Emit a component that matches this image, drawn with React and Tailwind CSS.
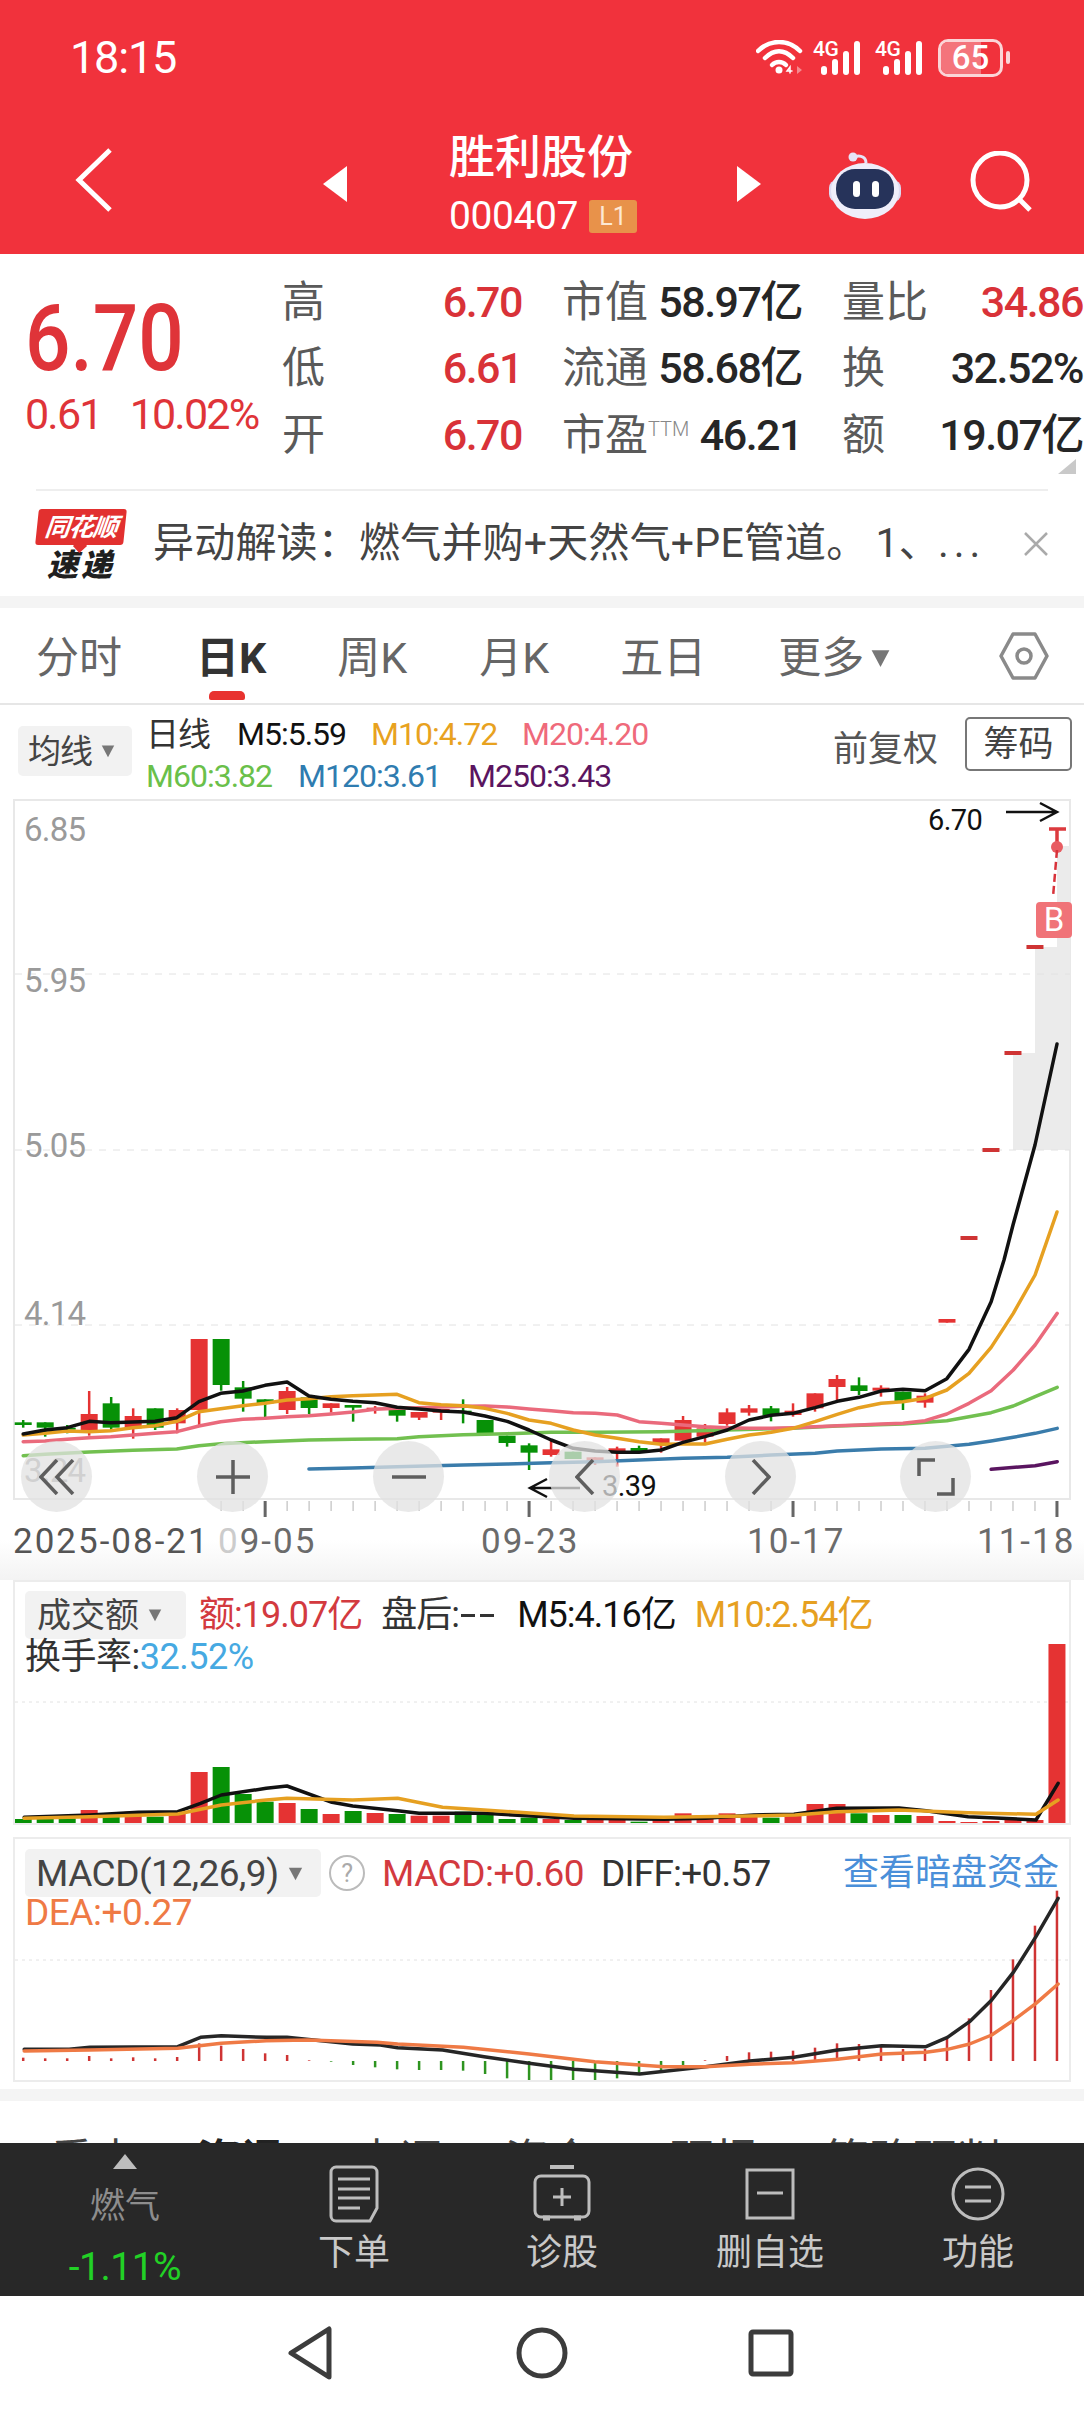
import React from 'react'

const RED = '#e53333'
const GREEN = '#079107'

const cx = (i) => 23.2 + 21.995 * i
const zy = (y) => 1260 + y / 3

// r/g, body top, body bottom, wick top, wick bottom (zoomed y)
const candles = [
  ['g', 487, 495, 480, 503], ['g', 487, 503, 487, 530], ['g', 503, 507, 495, 520], ['r', 462, 515, 393, 527],
  ['g', 430, 503, 411, 510], ['r', 468, 505, 445, 536], ['g', 445, 503, 445, 510], ['r', 450, 490, 445, 520],
  ['r', 237, 450, 237, 495], ['g', 237, 375, 237, 392], ['g', 382, 416, 363, 455], ['g', 418, 430, 418, 472],
  ['r', 393, 450, 381, 462], ['g', 412, 444, 412, 462], ['r', 430, 444, 430, 458], ['g', 435, 443, 435, 485],
  ['r', 443, 449, 438, 461], ['g', 450, 467, 450, 485], ['r', 456, 473, 456, 480], ['r', 447, 458, 447, 480],
  ['g', 452, 458, 418, 490], ['g', 480, 522, 480, 522], ['g', 527, 549, 527, 560], ['g', 556, 578, 550, 630],
  ['r', 568, 585, 543, 590], ['g', 575, 597, 575, 597], ['r', 592, 606, 592, 615], ['r', 565, 577, 560, 620],
  ['g', 564, 577, 557, 577], ['r', 535, 552, 535, 578], ['r', 480, 542, 468, 542], ['r', 505, 530, 492, 548],
  ['r', 457, 492, 445, 497], ['r', 445, 458, 435, 467], ['g', 445, 467, 438, 484], ['r', 452, 465, 430, 470],
  ['r', 400, 445, 400, 455], ['r', 357, 381, 345, 420], ['g', 376, 393, 352, 405], ['r', 383, 392, 376, 410],
  ['g', 395, 423, 395, 450], ['r', 407, 428, 400, 443], ['r', 177, 188, 177, 188],
]

const dashes = [[43, 1238], [44, 1150], [45, 1053], [46, 947]]

const z3 = (pts) => pts.map(([x, y]) => [x / 2.8, zy(y)])
const z4 = (pts) => pts.map(([x, y]) => [524 + x / 2.8, zy(y)])

const m5 = [
  ...z3([[65, 522], [126, 510], [188, 503], [250, 484], [310, 488], [372, 486], [434, 484], [495, 473], [557, 425], [618, 400], [680, 393], [742, 376], [804, 366], [865, 408], [927, 418], [988, 424], [1050, 428], [1112, 442], [1173, 447], [1235, 453], [1297, 456], [1358, 468], [1420, 484]]),
  ...z4([[14, 510], [76, 540], [138, 565], [199, 573], [261, 577], [322, 577], [384, 570], [445, 547], [507, 530], [569, 510], [630, 480], [692, 466], [753, 460], [815, 443], [877, 424], [938, 412], [1000, 393], [1061, 388], [1123, 392], [1184, 356], [1246, 268], [1308, 125]]),
  [1004, 1260], [1013, 1225], [1035, 1145], [1057, 1044],
]
const m10 = [
  ...z3([[65, 525], [126, 520], [188, 513], [250, 515], [310, 512], [372, 503], [434, 497], [495, 484], [557, 455], [618, 446], [680, 437], [742, 430], [804, 420], [865, 416], [927, 410], [988, 407], [1050, 405], [1112, 403], [1173, 428], [1235, 434], [1297, 437], [1358, 445], [1420, 460]]),
  ...z4([[14, 480], [76, 490], [138, 510], [199, 525], [261, 535], [322, 545], [384, 553], [445, 552], [507, 552], [569, 538], [630, 525], [692, 517], [753, 505], [815, 485], [877, 463], [938, 443], [1000, 430], [1061, 425], [1123, 415], [1184, 390], [1246, 340], [1308, 262], [1370, 160], [1431, 45]]),
  [1057, 1212],
]
const m20 = [
  ...z3([[65, 545], [126, 543], [188, 538], [250, 533], [310, 530], [372, 525], [434, 520], [495, 515], [557, 498], [618, 485], [680, 478], [742, 475], [804, 470], [865, 467], [927, 462], [988, 456], [1050, 448], [1112, 445], [1173, 443], [1235, 441], [1297, 439], [1358, 438], [1420, 441]]),
  ...z4([[14, 447], [76, 452], [138, 458], [199, 460], [261, 465], [322, 485], [384, 490], [445, 495], [507, 500], [569, 503], [630, 505], [692, 505], [753, 503], [815, 500], [877, 497], [938, 495], [1000, 492], [1061, 490], [1123, 482], [1184, 462], [1246, 430], [1308, 392], [1370, 330], [1431, 255], [1493, 160]]),
]
const m60 = [
  ...z3([[65, 587], [126, 583], [250, 576], [372, 571], [495, 567], [557, 557], [618, 551], [742, 545], [865, 540], [988, 538], [1112, 536], [1173, 530], [1297, 524], [1420, 521]]),
  ...z4([[76, 517], [200, 517], [384, 515], [569, 510], [753, 505], [877, 498], [1061, 492], [1184, 482], [1308, 458], [1370, 438], [1431, 410], [1493, 382]]),
]
const m120 = [
  ...z3([[865, 627], [988, 624], [1112, 620], [1297, 615], [1420, 612]]),
  ...z4([[76, 608], [199, 605], [322, 600], [445, 595], [569, 592], [692, 585], [815, 580], [877, 573], [1000, 567], [1123, 565], [1246, 553], [1308, 543], [1370, 532], [1431, 520], [1493, 505]]),
]
const m250 = z4([[1308, 628], [1431, 617], [1493, 605]])

// volume bars: color + top in zoomed y
const volume = [
  ['g', 747], ['g', 747], ['g', 745], ['r', 720], ['g', 740], ['r', 725], ['g', 740], ['r', 730], ['r', 606], ['g', 591],
  ['g', 672], ['g', 695], ['r', 699], ['g', 717], ['r', 732], ['g', 723], ['r', 729], ['g', 732], ['r', 737], ['r', 737],
  ['g', 725], ['g', 733], ['g', 747], ['g', 743], ['r', 747], ['g', 750], ['r', 747], ['r', 747], ['g', 755], ['r', 747],
  ['r', 730], ['r', 742], ['r', 730], ['r', 740], ['g', 743], ['r', 738], ['r', 702], ['r', 702], ['g', 730], ['r', 735],
  ['g', 735], ['r', 738], ['r', 753], ['r', 756], ['r', 753], ['r', 748], ['r', 750], ['r', 222],
]
const volBlack = [[35, 742], [130, 735], [200, 727], [257, 725], [290, 700], [320, 675], [385, 655], [415, 648], [480, 697], [510, 708], [575, 722], [606, 730], [700, 730], [830, 745], [960, 748], [1020, 745], [1090, 735], [1148, 733], [1210, 715], [1300, 714], [1339, 722], [1400, 740], [1498, 750], [1530, 640]]
const volOrange = [[35, 745], [130, 740], [257, 732], [320, 705], [385, 690], [415, 685], [510, 690], [575, 685], [640, 712], [700, 720], [830, 738], [960, 742], [1084, 738], [1150, 735], [1211, 725], [1300, 720], [1400, 728], [1498, 733], [1530, 690]]

const macdTops = [683, 685, 685, 678, 685, 682, 685, 681, 640, 647, 657, 670, 675, 691, 695, 705, 712, 718, 720, 720, 722, 732, 745, 752, 755, 755, 755, 745, 735, 720, 708, 691, 678, 667, 665, 662, 653, 640, 642, 647, 657, 657, 625, 565, 480, 388, 287, 182]
const macdBlack = [[35, 658], [100, 658], [130, 652], [257, 650], [290, 622], [320, 617], [385, 622], [415, 622], [510, 642], [550, 645], [575, 653], [640, 660], [700, 680], [765, 700], [830, 718], [925, 732], [1020, 710], [1084, 693], [1148, 682], [1211, 660], [1275, 647], [1339, 650], [1370, 622], [1402, 575], [1434, 510], [1466, 425], [1498, 320], [1530, 205]]
const macdOrange = [[35, 663], [130, 660], [257, 655], [320, 640], [385, 632], [445, 630], [545, 637], [575, 642], [670, 652], [765, 672], [860, 695], [960, 710], [1020, 710], [1084, 703], [1148, 698], [1211, 688], [1275, 672], [1339, 667], [1370, 658], [1402, 642], [1434, 615], [1466, 570], [1498, 520], [1530, 462]]

const toPts = (pts) => pts.map((p) => p.join(',')).join(' ')
const lower = (pts, base) => pts.map(([x, y]) => [x / 1.446, base + y / 3])

function Line({ pts, color, w = 3.5 }) {
  return <polyline points={toPts(pts)} fill="none" stroke={color} strokeWidth={w} strokeLinejoin="round" strokeLinecap="round" />
}

function Caret({ className }) {
  return (
    <svg width="18" height="18" viewBox="0 0 18 18" className={className}>
      <path d="M1 2h16L9 17z" fill="#777" />
    </svg>
  )
}

function StatusBar() {
  const Signal = () => (
    <svg width="50" height="36" viewBox="0 0 50 36" className="overflow-visible">
      <text x="0" y="16" fontSize="21" fontWeight="500" fill="#fff" fontFamily="Roboto" letterSpacing="-0.5">4G</text>
      <g fill="#fff">
        <rect x="8" y="26" width="6" height="9" rx="3" />
        <rect x="19" y="19" width="6" height="16" rx="3" />
        <rect x="30" y="11" width="6" height="24" rx="3" />
        <rect x="41" y="1" width="6" height="34" rx="3" />
      </g>
    </svg>
  )
  return (
    <div className="flex items-center h-[114px] pl-[70px] pt-[1px]">
      <span className="text-[45px] leading-none text-white tracking-[-1.2px]">18:15</span>
      <div className="ml-auto mr-[74px] flex items-center">
        <svg width="48" height="36" viewBox="0 0 48 36" fill="none" stroke="#fff" strokeWidth="4.5" strokeLinecap="round">
          <path d="M2 11C14 -1 32 -1 44 11" />
          <path d="M9 18C18 9 28 9 37 18" />
          <path d="M16 25C20 21 26 21 30 25" />
          <circle cx="23" cy="30" r="3.5" fill="#fff" stroke="none" />
          <path d="M34 33v-6l-3 4h5" stroke="#fff" strokeWidth="1.5" />
          <path d="M41 26l5 4-5 4z" fill="#f58a90" stroke="none" />
        </svg>
        <div className="ml-[9px]"><Signal /></div>
        <div className="ml-[12px]"><Signal /></div>
        <div className="ml-[13px] relative w-[65px] h-[38px] rounded-[10px] border-[3px] border-[#fbd5d7] overflow-hidden flex items-center justify-center">
          <div className="absolute left-0 top-0 bottom-0 w-[68%] bg-[#f4747b]" />
          <span className="relative text-[33px] font-medium leading-none text-white">65</span>
        </div>
        <div className="ml-[3px] w-[4px] h-[13px] rounded-full bg-[#fbd5d7]" />
      </div>
    </div>
  )
}

function NavRow() {
  return (
    <div className="flex items-center h-[140px] pb-[8px]">
      <svg width="40" height="64" viewBox="0 0 40 64" className="ml-[74px]" fill="none" stroke="#fff" strokeWidth="5">
        <path d="M36 2L5 32l31 30" />
      </svg>
      <svg width="24" height="36" viewBox="0 0 24 36" className="ml-[209px] mt-[8px]"><path d="M24 0v36L0 18z" fill="#fff" /></svg>
      <div className="ml-[102px] w-[200px] flex flex-col mt-[9px]">
        <span className="text-[46px] leading-none font-medium text-white">胜利股份</span>
        <div className="flex items-center mt-[17px]">
          <span className="text-[39px] leading-none text-white tracking-[-0.4px]">000407</span>
          <span className="ml-[11px] w-[48px] h-[33px] bg-[#e8924a] rounded-[3px] text-[#fde8d4] text-[25px] leading-[33px] text-center">L1</span>
        </div>
      </div>
      <svg width="24" height="36" viewBox="0 0 24 36" className="ml-[88px] mt-[8px]"><path d="M0 0v36l24-18z" fill="#fff" /></svg>
      <svg width="76" height="70" viewBox="0 0 76 70" className="ml-[66px] mt-[10px]">
        <path d="M26 8c4-3 13-3 13 5" fill="none" stroke="#e6e4f7" strokeWidth="3" />
        <circle cx="26" cy="7" r="4.5" fill="#e6e4f7" />
        <rect x="2" y="30" width="72" height="22" rx="8" fill="#dcdbf2" />
        <ellipse cx="38" cy="41" rx="34" ry="28" fill="#efeefa" />
        <rect x="9" y="19" width="58" height="40" rx="19" fill="#26335a" />
        <rect x="26" y="31" width="7" height="16" rx="3.5" fill="#fff" />
        <rect x="45" y="31" width="7" height="16" rx="3.5" fill="#fff" />
      </svg>
      <svg width="64" height="64" viewBox="0 0 64 64" className="ml-[67px] mt-[6px]" fill="none" stroke="#fff" strokeWidth="5">
        <circle cx="30" cy="29" r="27" />
        <path d="M49 48l11 11" />
      </svg>
    </div>
  )
}

function QuoteCell({ label, value, tone, sup }) {
  return (
    <div className="flex justify-between items-center h-[66.5px]">
      <span className="text-[43px] leading-none text-[#5a5a5a] whitespace-nowrap">
        {label}
        {sup && <span className="text-[20px] align-[14px] text-[#888] font-light">{sup}</span>}
      </span>
      <span className={`text-[43px] leading-none tracking-[-1.5px] font-medium whitespace-nowrap ${tone === 'red' ? 'text-[#d93238]' : 'text-[#262626]'}`}>{value}</span>
    </div>
  )
}

function Quote() {
  return (
    <div className="relative h-[235px] flex">
      <div className="w-[282px] pl-[25px] pt-[40px] shrink-0">
        <div className="inline-block origin-left scale-x-[0.87] text-[92px] leading-[90px] font-medium text-[#df3439]">6.70</div>
        <div className="flex mt-[9px] text-[43px] leading-none text-[#df3439] tracking-[-1.8px]">
          <span>0.61</span>
          <span className="ml-[28px]">10.02%</span>
        </div>
      </div>
      <div className="grid grid-cols-[240px_240px_241px] gap-x-[40px] pt-[15px] h-fit">
        <QuoteCell label="高" value="6.70" tone="red" />
        <QuoteCell label="市值" value="58.97亿" />
        <QuoteCell label="量比" value="34.86" tone="red" />
        <QuoteCell label="低" value="6.61" tone="red" />
        <QuoteCell label="流通" value="58.68亿" />
        <QuoteCell label="换" value="32.52%" />
        <QuoteCell label="开" value="6.70" tone="red" />
        <QuoteCell label="市盈" sup="TTM" value="46.21" />
        <QuoteCell label="额" value="19.07亿" />
      </div>
      <div className="absolute right-[8px] top-[205px] w-0 h-0 border-l-[18px] border-l-transparent border-b-[15px] border-b-[#c9c9c9]" />
    </div>
  )
}

function NewsRow() {
  return (
    <div className="mx-[36px] h-[107px] border-t-2 border-[#eeeeee] flex items-center">
      <div className="w-[90px] h-[72px] shrink-0 flex flex-col items-center relative mt-[2px]">
        <div className="relative w-[88px] h-[36px] bg-[#e2302f] rounded-[3px] -skew-x-6 flex items-center justify-center">
          <span className="text-[25px] leading-none font-bold italic text-white whitespace-nowrap tracking-[-1px]">同花顺</span>
          <div className="absolute left-[40px] bottom-[-6px] w-[10px] h-[10px] bg-[#e2302f] rotate-45" />
        </div>
        <span className="text-[31px] leading-none font-black italic text-[#1f1f1f] mt-[5px] tracking-[3px]">速递</span>
      </div>
      <span className="ml-[27px] w-[850px] text-[41px] leading-none text-[#444] whitespace-nowrap tracking-[0.2px]">
        异动解读：燃气并购+天然气+PE管道。
        <span className="ml-[8px]">1、</span>
        <span className="ml-[-2px] tracking-[5px]">...</span>
      </span>
      <svg width="24" height="24" viewBox="0 0 24 24" className="ml-[21px]" fill="none" stroke="#aaa" strokeWidth="2.5"><path d="M1 1l22 22M23 1L1 23" /></svg>
    </div>
  )
}

function Tabs() {
  return (
    <div className="relative h-[97px] border-b-2 border-[#e6e6e6] flex items-center text-[43px] leading-none text-[#666] pt-[5px]">
      <span className="ml-[36px]">分时</span>
      <span className="ml-[74px] font-bold text-[#333] relative">
        日K
        <span className="absolute left-[13px] top-[54px] w-[36px] h-[9px] rounded-t-[5px] rounded-b-[2px] bg-[#e8322f]" />
      </span>
      <span className="ml-[71px]">周K</span>
      <span className="ml-[72px]">月K</span>
      <span className="ml-[71px]">五日</span>
      <span className="ml-[72px]">更多</span>
      <Caret className="ml-[5px] w-[23px] h-[20px]" />
      <svg width="50" height="48" viewBox="0 0 50 48" className="ml-[107px] mt-[-5px]" fill="none" stroke="#8a8a8a" strokeWidth="3.5">
        <path d="M14 2h22l12 22-12 22H14L2 24z" strokeLinejoin="round" />
        <circle cx="25" cy="24" r="7" />
      </svg>
    </div>
  )
}

function MaHeader() {
  return (
    <div className="h-[94px] flex text-[32px] leading-none tracking-[-1px]">
      <div className="ml-[18px] mt-[21px] w-[114px] h-[50px] rounded-[5px] bg-[#f2f2f2] flex items-center pl-[10px] text-[33px] text-[#444]">
        均线
        <Caret className="ml-[8px] w-[16px] h-[14px]" />
      </div>
      <div className="ml-[14px] flex flex-col">
        <div className="flex items-center mt-[12px] h-[34px]">
          <span className="text-[33px] text-[#333]">日线</span>
          <span className="ml-[27px] text-[#111]">M5:5.59</span>
          <span className="ml-[25px] text-[#e8a21f]">M10:4.72</span>
          <span className="ml-[25px] text-[#ef6a7b]">M20:4.20</span>
        </div>
        <div className="flex items-center mt-[8px] h-[34px]">
          <span className="text-[#6ac04a]">M60:3.82</span>
          <span className="ml-[26px] text-[#2f7cb0]">M120:3.61</span>
          <span className="ml-[27px] text-[#5a1560]">M250:3.43</span>
        </div>
      </div>
      <span className="ml-auto mt-[27px] text-[35px] text-[#555] tracking-normal h-fit">前复权</span>
      <div className="ml-[27px] mr-[12px] mt-[12px] w-[107px] h-[54px] border-2 border-[#777] rounded-[5px] text-[35px] text-[#444] tracking-normal flex items-center justify-center">筹码</div>
    </div>
  )
}

function GridLine({ y, x1, x2, color = '#e2e2e2', dash = '7 7' }) {
  return <line x1={x1} x2={x2} y1={y} y2={y} stroke={color} strokeWidth="1" strokeDasharray={dash} />
}

const ROUND_BTN = 'absolute top-[640px] w-[71px] h-[71px] rounded-full bg-[#e2e2e2]/75 flex items-center justify-center'

function KChart() {
  return (
    <div className="relative mx-[13px] h-[701px] border-2 border-[#e8e8e8]">
      <svg width="1055" height="697" viewBox="15 801 1055 697" className="block overflow-visible" fontFamily="Roboto">
        <rect x="1013" y="1053" width="57" height="97" fill="#ebebeb" />
        <rect x="1035" y="947" width="35" height="106" fill="#ebebeb" />
        <rect x="1057" y="846" width="13" height="101" fill="#ebebeb" />
        <GridLine y={974} x1={15} x2={1070} />
        <GridLine y={1150} x1={15} x2={1070} />
        <GridLine y={1325} x1={15} x2={1070} />
        <g fontSize="33" fill="#9a9a9a" letterSpacing="-0.8">
          <text x="24" y="841">6.85</text>
          <text x="24" y="992">5.95</text>
          <text x="24" y="1157">5.05</text>
          <text x="24" y="1325">4.14</text>
          <text x="24" y="1482">3.24</text>
        </g>
        {candles.map(([c, bt, bb, wt, wb], i) => {
          const color = c === 'r' ? RED : GREEN
          return (
            <g key={i}>
              <line x1={cx(i)} x2={cx(i)} y1={zy(wt)} y2={zy(wb)} stroke={color} strokeWidth="2.5" />
              <rect x={cx(i) - 8.5} y={zy(bt)} width="17" height={Math.max((bb - bt) / 3, 2)} fill={color} />
            </g>
          )
        })}
        {dashes.map(([i, y]) => (
          <rect key={i} x={cx(i) - 8.5} y={y - 2} width="17" height="4" fill="#cf3434" />
        ))}
        <Line pts={m250} color="#5a1560" />
        <Line pts={m120} color="#3a7cab" />
        <Line pts={m60} color="#72c050" />
        <Line pts={m20} color="#ea6a7c" />
        <Line pts={m10} color="#e6a021" />
        <Line pts={m5} color="#111111" />
        <path d="M1049 829h17M1057 829v18" stroke="#dc3a3e" strokeWidth="3.5" fill="none" />
        <circle cx="1057" cy="847" r="6" fill="#e85c62" />
        <line x1="1057" y1="850" x2="1053" y2="897" stroke="#d8323a" strokeWidth="2.5" strokeDasharray="8 4" />
        <text x="928" y="830" fontSize="29" fill="#111" letterSpacing="-0.6">6.70</text>
        <path d="M1006 812h50M1040 803l17 9-17 9" fill="none" stroke="#111" strokeWidth="2.5" />
        <text x="602" y="1496" fontSize="29" fill="#111" letterSpacing="-0.6">3.39</text>
        <path d="M580 1488h-50M547 1479l-17 9 17 9" fill="none" stroke="#111" strokeWidth="2.5" />
      </svg>
      <div className="absolute left-[1021px] top-[101px] w-[36px] h-[36px] rounded-[4px] bg-[#f07378] text-white text-[33px] leading-[36px] text-center">
        B
        <div className="absolute left-[14px] top-[-4px] w-[9px] h-[9px] bg-[#f07378] rotate-45 -z-10" />
      </div>
      <div className={`${ROUND_BTN} left-[6px]`}>
        <svg width="36" height="36" viewBox="0 0 36 36" fill="none" stroke="#5e5e5e" strokeWidth="3.5"><path d="M18 1L2 18l16 17M34 1L18 18l16 17" /></svg>
      </div>
      <div className={`${ROUND_BTN} left-[182px]`}>
        <svg width="34" height="34" viewBox="0 0 34 34" fill="none" stroke="#5e5e5e" strokeWidth="3.5"><path d="M0 17h34M17 0v34" /></svg>
      </div>
      <div className={`${ROUND_BTN} left-[358px]`}>
        <svg width="34" height="6" viewBox="0 0 34 6" fill="none" stroke="#5e5e5e" strokeWidth="3.5"><path d="M0 3h34" /></svg>
      </div>
      <div className={`${ROUND_BTN} left-[534px]`}>
        <svg width="20" height="36" viewBox="0 0 20 36" fill="none" stroke="#5e5e5e" strokeWidth="3.5"><path d="M18 1L2 18l16 17" /></svg>
      </div>
      <div className={`${ROUND_BTN} left-[710px]`}>
        <svg width="20" height="36" viewBox="0 0 20 36" fill="none" stroke="#5e5e5e" strokeWidth="3.5"><path d="M2 1l16 17L2 35" /></svg>
      </div>
      <div className={`${ROUND_BTN} left-[885px]`}>
        <svg width="38" height="38" viewBox="0 0 38 38" fill="none" stroke="#5e5e5e" strokeWidth="3.5"><path d="M2 18V2h16M36 20v16H20" /></svg>
      </div>
    </div>
  )
}

function Axis() {
  const minor = Array.from({ length: 38 }, (_, i) => i + 9).filter((i) => ![11, 23, 35].includes(i))
  return (
    <div className="h-[80px] bg-linear-to-b from-white via-white to-[#f3f3f3]">
      <svg width="1084" height="18" viewBox="0 1499 1084 18" className="block">
        {minor.map((i) => (
          <line key={i} x1={cx(i)} x2={cx(i)} y1="1500" y2="1510" stroke="#cccccc" strokeWidth="1.5" />
        ))}
        {[11, 23, 35, 47].map((i) => (
          <line key={i} x1={cx(i)} x2={cx(i)} y1="1500" y2="1516" stroke="#666" strokeWidth="3" />
        ))}
      </svg>
      <div className="flex text-[35px] leading-none text-[#6b6b6b] mt-[6px] tracking-[2px]">
        <span className="ml-[13px] w-[205px] text-[#555]">2025-08-21</span>
        <span className="w-[263px]"><span className="text-[#cccccc]">0</span>9-05</span>
        <span className="w-[266px]">09-23</span>
        <span className="w-[230px]">10-17</span>
        <span>11-18</span>
      </div>
    </div>
  )
}

function Volume() {
  return (
    <div className="relative mx-[13px] h-[245px] border-2 border-[#ececec] tracking-[-1px]">
      <svg width="1055" height="241" viewBox="15 1582 1055 241" className="absolute left-0 top-0">
        <GridLine y={1702} x1={15} x2={1070} dash="3 4" />
        {volume.map(([c, t], i) => (
          <rect key={i} x={cx(i) - 8.5} y={1570 + t / 3} width="17" height={1825 - 1570 - t / 3} fill={c === 'r' ? '#e53333' : '#079107'} />
        ))}
        <Line pts={lower(volBlack, 1570)} color="#111" />
        <Line pts={lower(volOrange, 1570)} color="#e6a021" />
      </svg>
      <div className="relative flex items-center pt-[9px] pl-[10px] text-[36px] leading-none">
        <div className="w-[161px] h-[48px] rounded-[5px] bg-[#f2f2f2] flex items-center pl-[12px] text-[#444] tracking-normal text-[34px]">
          成交额
          <Caret className="ml-[8px] w-[16px] h-[14px]" />
        </div>
        <span className="ml-[13px] text-[#d33a3f]">额:19.07亿</span>
        <span className="ml-[19px] w-[121px] text-[#333] flex items-center">
          盘后:
          <span className="ml-[2px] w-[14px] h-[3px] bg-[#333]" />
          <span className="ml-[5px] w-[14px] h-[3px] bg-[#333]" />
        </span>
        <span className="ml-[15px] text-[#111]">M5:4.16亿</span>
        <span className="ml-[19px] text-[#e6a021]">M10:2.54亿</span>
      </div>
      <div className="relative pl-[10px] text-[36px] leading-[36px] tracking-[-0.5px] text-[#333]">
        换手率:<span className="text-[#46a9e2]">32.52%</span>
      </div>
    </div>
  )
}

function Macd() {
  return (
    <div className="relative mx-[13px] mt-[12px] h-[245px] border-2 border-[#ececec] tracking-[-0.5px]">
      <svg width="1055" height="241" viewBox="15 1839 1055 241" className="absolute left-0 top-0">
        <GridLine y={1960} x1={15} x2={1070} dash="3 4" />
        {macdTops.map((t, i) => {
          const top = 1830 + t / 3
          return <line key={i} x1={cx(i)} x2={cx(i)} y1={Math.min(top, 2061)} y2={Math.max(top, 2061)} stroke={t > 693 ? '#2e9420' : '#cf3434'} strokeWidth="2.5" />
        })}
        <Line pts={lower(macdBlack, 1830)} color="#262626" />
        <Line pts={lower(macdOrange, 1830)} color="#ef7a45" />
      </svg>
      <div className="relative flex items-center pt-[10px] pl-[10px] text-[37px] leading-none">
        <div className="w-[296px] h-[48px] rounded-[5px] bg-[#f2f2f2] flex items-center pl-[11px] text-[#444] text-[37px] tracking-[-0.5px]">
          MACD(12,26,9)
          <Caret className="ml-[8px] w-[17px] h-[15px]" />
        </div>
        <span className="ml-[8px] w-[36px] h-[36px] rounded-full border-2 border-[#bbb] text-[#aaa] text-[25px] flex items-center justify-center">?</span>
        <span className="ml-[17px] text-[#d33a3f]">MACD:+0.60</span>
        <span className="ml-[17px] text-[#333] tracking-[-0.8px]">DIFF:+0.57</span>
        <span className="ml-auto mr-[10px] text-[#4a8fd9] tracking-normal text-[36px]">查看暗盘资金</span>
      </div>
      <div className="relative pl-[10px] mt-[-2px] text-[37px] leading-[36px] text-[#ef7a45]">DEA:+0.27</div>
    </div>
  )
}

function BarItem({ label, children }) {
  return (
    <div className="w-[208px] flex flex-col items-center pt-[22px]">
      <div className="h-[58px] flex items-center">{children}</div>
      <span className="mt-[12px] text-[36px] leading-none text-[#c9c9c9]">{label}</span>
    </div>
  )
}

function BottomBar() {
  return (
    <div className="h-[153px] bg-[#282828] flex">
      <div className="w-[250px] flex flex-col items-center">
        <div className="mt-[11px] w-0 h-0 border-x-[12px] border-x-transparent border-b-[15px] border-b-[#bdbdbd]" />
        <span className="mt-[20px] text-[35px] leading-none text-[#8d8d8d]">燃气</span>
        <span className="mt-[24px] text-[39px] leading-none text-[#22d126] tracking-[-0.5px]">-1.11%</span>
      </div>
      <BarItem label="下单">
        <svg width="50" height="58" viewBox="0 0 50 58" fill="none" stroke="#bdbdbd" strokeWidth="3">
          <path d="M7 2h36a5 5 0 0 1 5 5v36l-7 13H7a5 5 0 0 1-5-5V7a5 5 0 0 1 5-5z" />
          <path d="M9 14h32M9 24h32M9 33h32M9 43h22" />
        </svg>
      </BarItem>
      <BarItem label="诊股">
        <svg width="58" height="58" viewBox="0 0 58 58" fill="none" stroke="#bdbdbd" strokeWidth="3">
          <path d="M17 2h24" strokeWidth="4" />
          <rect x="2" y="11" width="54" height="41" rx="6" />
          <path d="M29 23v18M20 32h18" />
          <path d="M10 53h7M41 53h7" strokeWidth="5" />
        </svg>
      </BarItem>
      <BarItem label="删自选">
        <svg width="50" height="52" viewBox="0 0 50 52" fill="none" stroke="#bdbdbd" strokeWidth="3">
          <rect x="2" y="2" width="46" height="48" />
          <path d="M12 25h26" />
        </svg>
      </BarItem>
      <BarItem label="功能">
        <svg width="54" height="54" viewBox="0 0 54 54" fill="none" stroke="#bdbdbd" strokeWidth="3">
          <circle cx="27" cy="27" r="25" />
          <path d="M14 20h26M14 34h26" />
        </svg>
      </BarItem>
    </div>
  )
}

function SysNav() {
  return (
    <div className="flex-1 bg-white flex items-center pb-[2px]">
      <svg width="48" height="54" viewBox="0 0 48 54" className="ml-[288px]" fill="none" stroke="#3c3c3c" strokeWidth="5" strokeLinejoin="round">
        <path d="M41 3v48L3 27z" />
      </svg>
      <svg width="52" height="52" viewBox="0 0 52 52" className="ml-[180px]" fill="none" stroke="#3c3c3c" strokeWidth="5">
        <circle cx="26" cy="26" r="23" />
      </svg>
      <svg width="46" height="48" viewBox="0 0 46 48" className="ml-[180px]" fill="none" stroke="#3c3c3c" strokeWidth="5" strokeLinejoin="round">
        <rect x="3" y="3" width="40" height="42" rx="2" />
      </svg>
    </div>
  )
}

export default function App() {
  return (
    <div className="w-[1084px] h-[2412px] overflow-hidden bg-white flex flex-col font-['Roboto','Noto_Sans_CJK_SC',sans-serif]">
      <div className="h-[254px] bg-[#f1323c] shrink-0">
        <StatusBar />
        <NavRow />
      </div>
      <Quote />
      <NewsRow />
      <div className="h-[12px] bg-[#f4f4f4] shrink-0" />
      <Tabs />
      <MaHeader />
      <KChart />
      <Axis />
      <Volume />
      <Macd />
      <div className="h-[7px] shrink-0" />
      <div className="h-[12px] bg-[#f4f4f4] shrink-0" />
      <div className="h-[42px] shrink-0 overflow-hidden flex items-start pt-[38px] text-[44px] leading-none text-[#444] pl-[50px] whitespace-nowrap">
        <span>重点</span>
        <span className="ml-[59px] font-bold text-[#222]">资讯</span>
        <span className="ml-[70px]">点评</span>
        <span className="ml-[62px]">资金</span>
        <span className="ml-[77px]">研报</span>
        <span className="ml-[67px]">策略研判</span>
      </div>
      <BottomBar />
      <SysNav />
    </div>
  )
}
